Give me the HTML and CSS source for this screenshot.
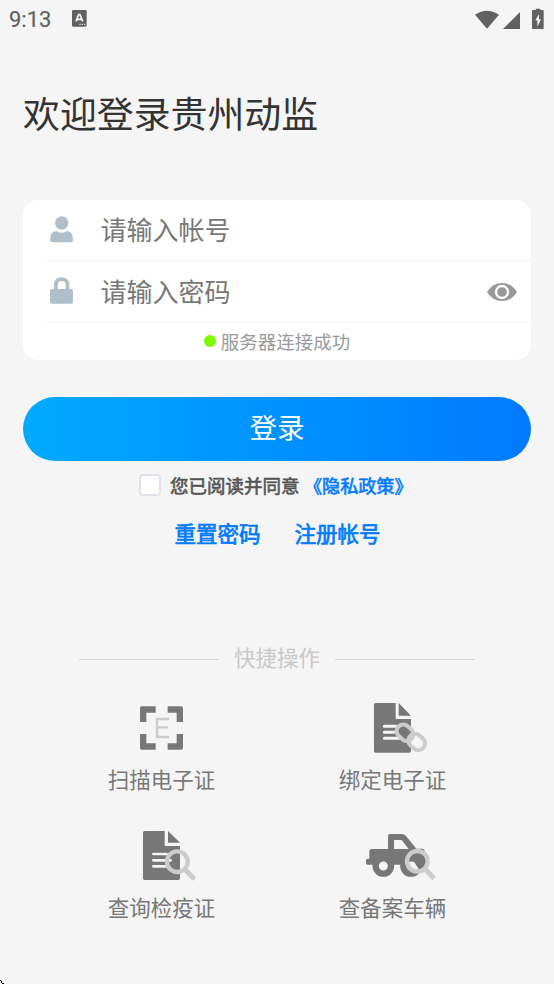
FILE: index.html
```html
<!DOCTYPE html>
<html lang="zh-CN">
<head>
<meta charset="utf-8">
<title>登录</title>
<link rel="stylesheet" href="styles.css">
</head>
<body>
<header class="statusbar">
  <span class="clock">9:13</span>
  <svg class="app-badge" width="15" height="17" viewBox="0 0 45 51"><rect width="44" height="50" rx="4" fill="#616161"/><path d="M12 34 20 14h4l8 20M15 28h14" fill="none" stroke="#f5f5f5" stroke-width="5"/><path d="M22 43h18" stroke="#f5f5f5" stroke-width="3" stroke-dasharray="4 3"/></svg>
  <svg class="signals" width="70" height="22" viewBox="0 0 210 66"><path d="M0 20Q36-4 72 20L36 62Z" fill="#616161"/><path d="M84 63 135 12V63Z" fill="#616161"/><path d="M173 6h9V2h14v4h8q2 0 2 2v53q0 2-2 2h-31q-2 0-2-2V8q0-2 2-2Z" fill="#616161"/><path d="M192 18 181 37h6v19l11-22h-6Z" fill="#f5f5f5"/></svg>
</header>
<main class="page">
  <h1 class="title">欢迎登录贵州动监</h1>
  <section class="card">
    <div class="field">
      <svg class="field-icon" width="23" height="27" viewBox="0 0 69 81"><circle cx="35" cy="21" r="20"/><path d="M0 72Q0 47 19 45Q26 50 35 50T51 45Q69 47 69 72Q69 79 62 79H7Q0 79 0 72Z"/></svg>
      <span class="placeholder">请输入帐号</span>
    </div>
    <div class="field">
      <svg class="field-icon" width="23" height="27" viewBox="0 0 69 81"><path d="M12 36V24Q12 1 35 1T58 24V36H63Q69 36 69 42V74Q69 80 63 80H6Q0 80 0 74V42Q0 36 6 36ZM23 36H47V25Q47 12 35 12T23 25Z"/></svg>
      <span class="placeholder">请输入密码</span>
      <svg class="eye" width="30" height="18" viewBox="0 0 90 54"><path d="M0 27Q17 0 45 0T90 27Q73 54 45 54T0 27Z" fill="#999"/><circle cx="45" cy="27" r="18" fill="#999" stroke="#fff" stroke-width="7"/></svg>
    </div>
    <div class="server"><i class="dot"></i>服务器连接成功</div>
  </section>
  <div class="login">登录</div>
  <div class="agree"><i class="checkbox"></i><span>您已阅读并同意</span><a class="policy">《隐私政策》</a></div>
  <nav class="links"><a>重置密码</a><a>注册帐号</a></nav>
  <div class="divider"><span>快捷操作</span></div>
  <section class="actions">
    <div class="action">
      <svg class="action-icon" viewBox="-12 0 273 210"><path d="M107 49V68H79V96H60V54Q60 49 65 49ZM143 49H184Q189 49 189 54V96H170V68H143ZM60 132H79V160H107V179H65Q60 179 60 174ZM170 132H189V174Q189 179 184 179H143V160H170Z" fill="#777"/><path d="M147 87H111V141H147M111 112H144" fill="none" stroke="#ccc" stroke-width="7"/></svg>
      <span>扫描电子证</span>
    </div>
    <div class="action">
      <svg class="action-icon" viewBox="-24 0 273 210"><path d="M62 39H122V87H168V183Q168 188 163 188H62Q57 188 57 183V44Q57 39 62 39ZM131 39 168 77H131Z" fill="#777"/><path d="M88 109H124M88 127H126M88 145H140" stroke="#f5f5f5" stroke-width="9" stroke-linecap="round"/><g fill="none" stroke="#ccc" stroke-width="12"><rect x="-27" y="-20" width="54" height="40" rx="20" transform="translate(150 128) rotate(42)"/><rect x="-27" y="-20" width="54" height="40" rx="20" transform="translate(185 156) rotate(42)"/></g></svg>
      <span>绑定电子证</span>
    </div>
    <div class="action">
      <svg class="action-icon" viewBox="-12 -6 273 210"><path d="M74 33H134V78H180V175Q180 180 175 180H74Q69 180 69 175V38Q69 33 74 33ZM144 33 180 68H144Z" fill="#777"/><path d="M100 102H140M100 121H134M100 139H137" stroke="#f5f5f5" stroke-width="8" stroke-linecap="round"/><circle cx="172" cy="125" r="31" fill="#777"/><path d="M180 94A31 31 0 0 1 180 156Z" fill="#f5f5f5"/><path d="M147 121h5" stroke="#f5f5f5" stroke-width="8" stroke-linecap="round"/><circle cx="172" cy="125" r="31" fill="none" stroke="#ccc" stroke-width="13"/><path d="m196 149 23 24" stroke="#ccc" stroke-width="15" stroke-linecap="round"/></svg>
      <span>查询检疫证</span>
    </div>
    <div class="action">
      <svg class="action-icon" viewBox="-24 -6 273 210"><path d="M50 87H99V48Q99 42 105 42H141Q148 42 153 48L184 86H203Q209 87 209 94V134H38Q33 134 33 129V121Q33 117 38 116H43V94Q43 87 50 87ZM117 60V87H161L140 60Z" fill="#777" fill-rule="evenodd"/><circle cx="85" cy="138" r="23" fill="#f5f5f5" stroke="#777" stroke-width="19"/><circle cx="168" cy="138" r="23" fill="#f5f5f5" stroke="#777" stroke-width="19"/><circle cx="187" cy="124" r="31" fill="#777"/><path d="M159 128Q168 121 178 127Q184 137 192 148Q169 157 159 128Z" fill="#f5f5f5"/><circle cx="187" cy="124" r="31" fill="none" stroke="#ccc" stroke-width="13"/><path d="m211 148 21 22" stroke="#ccc" stroke-width="15" stroke-linecap="square"/></svg>
      <span>查备案车辆</span>
    </div>
  </section>
</main>
<svg class="corner" width="5" height="5" viewBox="0 0 5 5"><path d="M0 1H1V2H2V3H1V2H0ZM1 3H2V4H1ZM2 4H4V5H2Z" fill="#000"/></svg>
</body>
</html>
```
FILE: styles.css
```css
* { box-sizing: border-box; }
body {
  margin: 0;
  height: 984px;
  overflow: hidden;
  position: relative;
  background: #f5f5f5;
  font-family: "Noto Sans CJK SC", sans-serif;
  color: #777;
}
svg { display: block; flex: none; }
.statusbar {
  height: 40px;
  padding: 6px 9px 0 9px;
  display: flex;
  align-items: flex-start;
}
.clock {
  width: 63px;
  font: 400 22px/28px Roboto, sans-serif;
  color: #616161;
  -webkit-text-stroke: 0.2px currentColor;
}
.app-badge { margin-top: 4px; }
.signals { margin: 2px 0 0 auto; }
.page { padding: 0 23px; }
.title {
  margin: 48px 0 64px;
  font-size: 36.9px;
  line-height: 48px;
  font-weight: 400;
  color: #333;
}
.card {
  height: 160px;
  background: #fff;
  border-radius: 15px;
}
.field {
  height: 61px;
  margin-left: 24px;
  padding: 0 14px 2px 3px;
  display: flex;
  align-items: center;
  border-bottom: 1px solid #f5f5f5;
}
.field + .field { height: 62px; }
.field-icon { fill: #b0c0ca; }
.placeholder {
  margin-left: 27.5px;
  font-size: 26px;
  line-height: 40px;
}
.eye { margin: 2px 0 0 auto; }
.server {
  height: 35px;
  display: flex;
  align-items: center;
  justify-content: center;
  font-size: 18.5px;
  color: #999;
}
.dot {
  width: 12px;
  height: 12px;
  margin-right: 5px;
  border-radius: 50%;
  background: #7cfc00;
}
.login {
  height: 64px;
  margin-top: 36.6px;
  border-radius: 32px;
  background: linear-gradient(90deg, #00aaff, #007aff);
  color: #fff;
  font-size: 27.5px;
  line-height: 59px;
  text-align: center;
}
.agree {
  height: 28px;
  margin-top: 10.4px;
  padding-left: 116px;
  display: flex;
  align-items: center;
  font-size: 18.5px;
  color: #555;
  -webkit-text-stroke: 0.6px currentColor;
  white-space: nowrap;
}
.checkbox {
  width: 22px;
  height: 22px;
  margin-right: 9px;
  border: 2px solid #dfe2e8;
  border-radius: 4px;
  background: #fff;
}
.policy {
  margin-left: 4.5px;
  color: #007aff;
  font-size: 18.2px;
  letter-spacing: -0.1px;
}
.links {
  height: 32px;
  margin-top: 18px;
  padding-left: 1px;
  display: flex;
  justify-content: center;
  align-items: center;
  gap: 34px;
  font-size: 21.5px;
  color: #007aff;
  -webkit-text-stroke: 0.7px currentColor;
}
.divider {
  height: 32px;
  margin: 92px 56px 0;
  display: flex;
  align-items: center;
  gap: 15px;
  font-size: 21.5px;
  color: #c8c8c8;
}
.divider::before, .divider::after {
  content: "";
  flex: 1;
  height: 1px;
  margin-top: 5px;
  background: #d8d8d8;
}
.actions {
  margin: 17px 23px 0;
  display: grid;
  grid-template-columns: 1fr 1fr;
  grid-auto-rows: 128px;
}
.action {
  display: flex;
  flex-direction: column;
  align-items: center;
  font-size: 21.5px;
  line-height: 38px;
}
.action-icon { width: 91px; height: 70px; }
.corner { position: absolute; left: 0; bottom: 0; }
```
